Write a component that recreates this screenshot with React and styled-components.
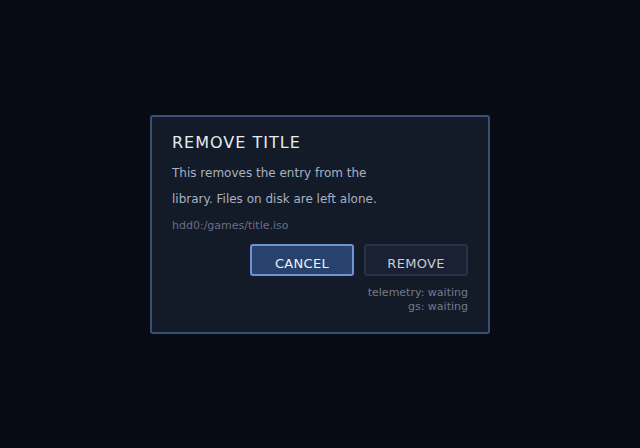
import React from 'react';
import styled, { createGlobalStyle } from 'styled-components';

const GlobalStyle = createGlobalStyle`
  html, body {
    margin: 0;
    padding: 0;
    background: #070b14;
  }
  body {
    font-family: "DejaVu Sans", sans-serif;
  }
`;

const Screen = styled.div`
  width: 640px;
  height: 448px;
  display: flex;
  align-items: center;
  justify-content: center;
  background: #070b14;
`;

const Dialog = styled.div`
  box-sizing: border-box;
  width: 340px;
  height: 219px;
  margin-top: 1px;
  padding: 16px 20px 18px 20px;
  background: #131a28;
  border: 2px solid #3a5079;
  border-radius: 3px;
  display: flex;
  flex-direction: column;
`;

const Title = styled.h2`
  margin: 0;
  font-size: 16px;
  font-weight: normal;
  letter-spacing: 1px;
  color: #e6eaf2;
  line-height: 20px;
`;

const Body = styled.p`
  margin: 7px 0 0 0;
  width: 220px;
  font-size: 12px;
  line-height: 26px;
  color: #a9b1c2;
`;

const Path = styled.div`
  margin-top: 6px;
  font-size: 11px;
  line-height: 16px;
  color: #687082;
`;

const Actions = styled.div`
  display: flex;
  justify-content: flex-end;
  gap: 10px;
  margin-top: 10px;
`;

const Button = styled.button`
  box-sizing: border-box;
  width: 104px;
  height: 32px;
  padding: 6px 0 0 0;
  font-family: "DejaVu Sans", sans-serif;
  font-size: 13px;
  letter-spacing: 0.3px;
  border-radius: 3px;
  color: ${p => (p.$primary ? '#eef2f8' : '#c6ccd8')};
  background: ${p => (p.$primary ? '#29426d' : '#1a2132')};
  border: 2px solid ${p => (p.$primary ? '#6e93d6' : '#283349')};
`;

const Status = styled.div`
  margin-top: 10px;
  text-align: right;
  font-size: 11px;
  line-height: 14px;
  color: #737b8b;
`;

export default function App() {
  return (
    <>
      <GlobalStyle />
      <Screen>
        <Dialog>
          <Title>REMOVE TITLE</Title>
          <Body>This removes the entry from the library. Files on disk are left alone.</Body>
          <Path>hdd0:/games/title.iso</Path>
          <Actions>
            <Button $primary>CANCEL</Button>
            <Button>REMOVE</Button>
          </Actions>
          <Status>
            telemetry: waiting
            <br />
            gs: waiting
          </Status>
        </Dialog>
      </Screen>
    </>
  );
}
